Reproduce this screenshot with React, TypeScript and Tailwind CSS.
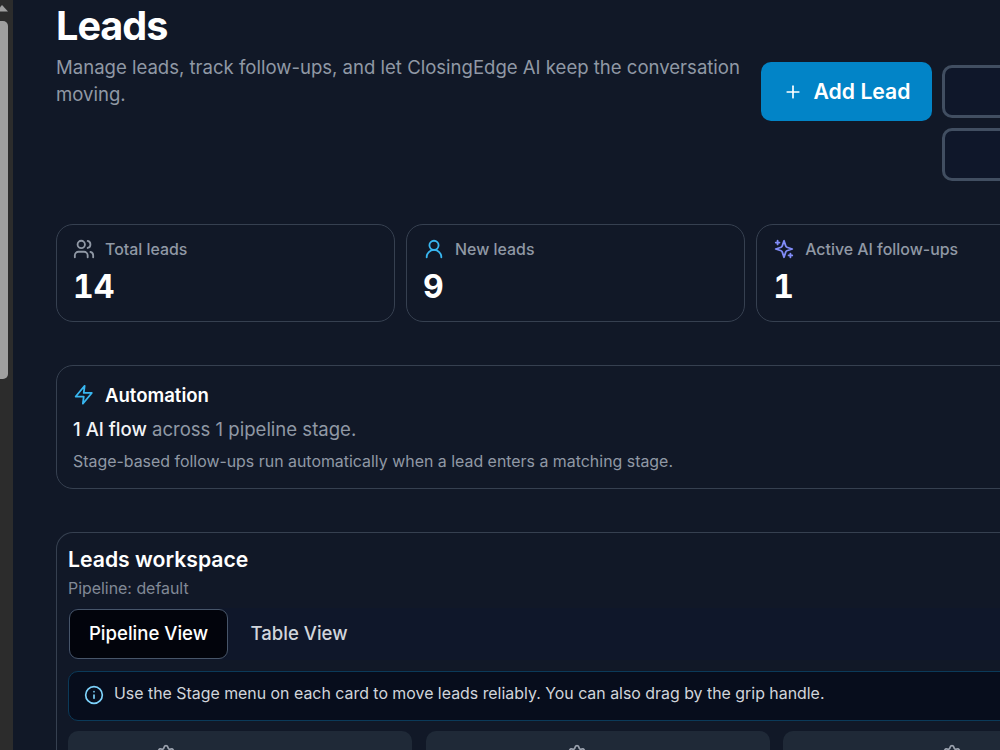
import type { ReactNode } from "react";
import { Info, Plus, Settings, UserRound, Users } from "lucide-react";

function SparklesIcon() {
  return (
    <svg width="22" height="22" viewBox="0 0 24 24" fill="none" stroke="currentColor" strokeWidth="2" strokeLinecap="round" strokeLinejoin="round" className="text-[#818cf8]">
      <path d="m12 3-1.912 5.813a2 2 0 0 1-1.275 1.275L3 12l5.813 1.912a2 2 0 0 1 1.275 1.275L12 21l1.912-5.813a2 2 0 0 1 1.275-1.275L21 12l-5.813-1.912a2 2 0 0 1-1.275-1.275L12 3Z" />
      <path d="M5 3v4M19 17v4M3 5h4M17 19h4" />
    </svg>
  );
}

function ZapIcon() {
  return (
    <svg width="21.5" height="21.5" viewBox="0 0 24 24" fill="none" stroke="currentColor" strokeWidth="2" strokeLinecap="round" strokeLinejoin="round" className="-ml-[0.5px] text-[#38b6f0]">
      <polygon points="13 2 3 14 12 14 11 22 21 10 12 10 13 2" />
    </svg>
  );
}

function StatCard({ icon, label, value }: { icon: ReactNode; label: string; value: string }) {
  return (
    <div className="h-[98px] w-[339.4px] shrink-0 rounded-[17px] border border-[#364050] px-4 pt-[12px]">
      <div className="-ml-[0.5px] flex h-[24px] items-center gap-[10.5px] text-[15.9px] font-medium text-[#9098a5]">
        {icon}
        <span className="pt-[2px]">{label}</span>
      </div>
      <div className="mt-[5px] text-[32px] leading-[42px] font-bold text-white tabular-nums">{value}</div>
    </div>
  );
}

function Column({ iconOffset }: { iconOffset: string }) {
  return (
    <div className="h-[60px] w-[344.4px] shrink-0 rounded-[10px] bg-[#1f2937] pt-[13px]">
      <Settings size={20} strokeWidth={2} className={`text-[#9ca3af] ${iconOffset}`} />
    </div>
  );
}

export default function App() {
  return (
    <div className="flex h-[750px] w-[1000px] overflow-hidden bg-[#111827] font-['Inter',sans-serif]">
      <div className="flex w-[13px] shrink-0 flex-col bg-[#2c2c2c]">
        <svg width="8" height="12" viewBox="0 0 8 12" className="shrink-0">
          <path d="M2 5L8 11.5H-4Z" fill="#9f9f9f" />
        </svg>
        <div className="mt-[9px] h-[358px] w-2 rounded-tr-[5px] rounded-br-[5px] bg-[#9f9f9f]" />
      </div>

      <main className="flex w-[987px] shrink-0 flex-col overflow-hidden pl-[43px]">
        <header className="flex h-[224px] shrink-0">
          <div className="w-[705px] shrink-0">
            <h1 className="pt-[4px] text-[39.6px] leading-[45px] font-bold tracking-[-0.025em] text-white">Leads</h1>
            <p className="mt-[5px] w-[700px] text-[18.56px] leading-[26.5px] text-[#9098a5]">
              Manage leads, track follow-ups, and let ClosingEdge AI keep the conversation moving.
            </p>
          </div>
          <button className="mt-[62px] flex h-[59px] w-[171px] shrink-0 items-center justify-center gap-[11px] rounded-[10px] bg-[#0284c7] text-[21.2px] font-semibold text-white">
            <Plus size={20} strokeWidth={2} />
            Add Lead
          </button>
          <div className="mt-[65px] ml-[10px] flex shrink-0 flex-col gap-[10px]">
            <button className="h-[53px] w-[150px] rounded-[10px] border-[3px] border-[#414e61] bg-[#0f172a]" />
            <button className="h-[53px] w-[150px] rounded-[10px] border-[3px] border-[#414e61] bg-[#0f172a]" />
          </div>
        </header>

        <section className="flex shrink-0 gap-[10.7px]">
          <StatCard icon={<Users size={22} strokeWidth={2} />} label="Total leads" value="14" />
          <StatCard icon={<UserRound size={22} strokeWidth={2} className="text-[#38b6f0]" />} label="New leads" value="9" />
          <StatCard icon={<SparklesIcon />} label="Active AI follow-ups" value="1" />
        </section>

        <section className="mt-[43px] h-[124px] w-[1100px] shrink-0 rounded-[17px] border border-[#364050] px-4 pt-[16px]">
          <h2 className="flex h-[26px] items-center gap-[11px] text-[18.56px] font-semibold text-white">
            <ZapIcon />
            <span className="pt-[2px]">Automation</span>
          </h2>
          <p className="mt-[7px] text-[18.56px] leading-[28px] text-[#9098a5]">
            <span className="font-medium text-[#f3f4f6]">1 AI flow</span> across 1 pipeline stage.
          </p>
          <p className="mt-[7px] text-[15.92px] leading-[24px] text-[#9098a5]">
            Stage-based follow-ups run automatically when a lead enters a matching stage.
          </p>
        </section>

        <section className="mt-[43px] h-[260px] w-[1100px] shrink-0 rounded-t-[17px] border border-b-0 border-[#364050] pt-[12px] pl-[11px]">
          <h2 className="text-[21.2px] leading-[28px] font-semibold text-white">Leads workspace</h2>
          <p className="mt-[4px] text-[15.9px] leading-[24px] text-[#818996]">Pipeline: default</p>
          <div className="mt-[7px] flex h-[52px] items-center rounded-[10px] bg-[#0f172a] px-[1px] text-[18.56px] font-medium">
            <div className="flex h-[50px] w-[159px] items-center justify-center rounded-[9px] border border-[#475569] bg-[#02040c] text-white">
              Pipeline View
            </div>
            <div className="ml-[22.5px] text-[#d1d5db]">Table View</div>
          </div>
          <div className="mt-[11px] flex h-[50px] items-start gap-[10px] rounded-[10px] border border-[#0b3a59] bg-[#070d1c] pt-[10px] pl-[15px] text-[15.9px] leading-[23px] text-[#d1d5db]">
            <Info size={20} strokeWidth={2} className="mt-[2.5px] text-[#7dd3fc]" />
            <span>Use the Stage menu on each card to move leads reliably. You can also drag by the grip handle.</span>
          </div>
          <div className="mt-[10px] flex gap-[13.2px]">
            <Column iconOffset="ml-[88px]" />
            <Column iconOffset="ml-[141.5px]" />
            <Column iconOffset="ml-[158.5px]" />
          </div>
        </section>
      </main>
    </div>
  );
}
